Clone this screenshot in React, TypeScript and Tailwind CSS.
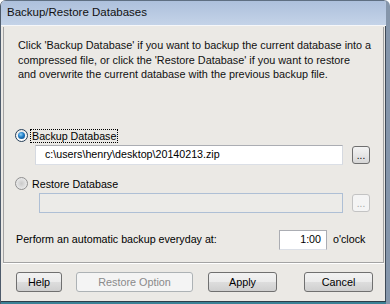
import React from "react";

function Radio({ checked }: { checked?: boolean }) {
  if (checked) {
    return (
      <span className="flex h-[13px] w-[13px] shrink-0 items-center justify-center rounded-full border border-[#263f58] bg-[linear-gradient(#e8e8e8,#ffffff)]">
        <span className="h-[7px] w-[7px] rounded-full bg-[radial-gradient(circle_at_40%_35%,#8fd2f8_0%,#1f7cc6_45%,#0b3f74_100%)]" />
      </span>
    );
  }
  return (
    <span className="h-[13px] w-[13px] shrink-0 rounded-full border border-[#8f8f8f] bg-[radial-gradient(circle_at_50%_50%,#c9c9c9_0%,#e2e2e2_55%,#f4f4f4_100%)]" />
  );
}

function BrowseButton({ disabled }: { disabled?: boolean }) {
  return (
    <button
      type="button"
      className={`ml-[9px] flex h-[18px] w-[18px] shrink-0 items-end justify-center rounded-[3px] border pb-[2px] text-[10px] leading-none ${
        disabled
          ? "border-[#c3c3c3] bg-[#f4f4f4] text-[#a6a6a6]"
          : "border-[#6f6f6f] bg-[linear-gradient(#f3f3f3,#e6e6e6_50%,#d6d6d6)] text-black"
      }`}
    >
      ...
    </button>
  );
}

function DlgButton({ label, width, disabled }: { label: string; width: string; disabled?: boolean }) {
  return (
    <button
      type="button"
      className={`${width} flex h-[20px] items-center justify-center rounded-[3px] border text-[10.8px] ${
        disabled
          ? "border-[#adb2b5] bg-[#f4f4f4] text-[#8a8a8a]"
          : "border-[#707070] bg-[linear-gradient(#f2f2f2,#ebebeb_50%,#dddddd_51%,#cfcfcf)] text-black"
      }`}
    >
      {label}
    </button>
  );
}

export default function App() {
  return (
    <div className="flex h-[304px] w-[390px] flex-col overflow-hidden rounded-tl-[6px] rounded-tr-[6px] border-l border-r-[4px] border-l-[#4e5b6b] border-r-[#8596ab] bg-[#ebe9e5] font-['Liberation_Sans',Arial,sans-serif] text-[10.7px] text-black">
      {/* title bar */}
      <div className="flex h-[25px] shrink-0 items-center border-t border-[#5f6f82] bg-[linear-gradient(#adc0dc,#c4d3e8)] pl-[6px] text-[11.5px] text-[#111]">
        Backup/Restore Databases
      </div>
      <div className="h-px shrink-0 bg-[#f6f7f9]" />

      <div className="flex flex-1 flex-col border-r border-r-[#3f4a57] pl-[2px] pr-px pt-px">
        {/* main panel */}
        <div className="flex h-[236px] flex-col border-x border-b border-[#a3a3a3]">
          <p className="mt-[11px] whitespace-nowrap pl-[14px] text-[10.85px] leading-[14.5px] text-[#111]">
            Click 'Backup Database' if you want to backup the current database into a
            <br />
            compressed file, or click the 'Restore Database' if you want to restore
            <br />
            and overwrite the current database with the previous backup file.
          </p>

          <div className="mt-[47px] flex h-[14px] items-center pl-[11px]">
            <Radio checked />
            <span className="ml-[2px] border border-dotted border-black px-px leading-[12px]">
              Backup Database
            </span>
          </div>
          <div className="mt-[2px] flex items-center pl-[31px]">
            <div className="flex h-[20px] w-[308px] items-center border border-[#abadb3] border-b-[#dbdfe6] border-x-[#d5d9e0] bg-white pl-[9px]">
              c:\users\henry\desktop\20140213.zip
            </div>
            <BrowseButton />
          </div>

          <div className="mt-[12px] flex h-[14px] items-center pl-[11px]">
            <Radio />
            <span className="ml-[2px] border border-transparent px-px leading-[12px]">
              Restore Database
            </span>
          </div>
          <div className="mt-[2px] flex items-center pl-[35px]">
            <div className="h-[20px] w-[304px] border border-[#aebfd5] bg-[#ecebe8]" />
            <BrowseButton disabled />
          </div>

          <div className="mt-[17px] flex items-center pl-[12px]">
            <span className="w-[263px]">Perform an automatic backup everyday at:</span>
            <div className="flex h-[20px] w-[48px] items-center justify-end border border-[#abadb3] border-b-[#dbdfe6] bg-white pr-[5px]">
              1:00
            </div>
            <span className="ml-[6px]">o'clock</span>
          </div>
        </div>

        {/* button bar */}
        <div className="flex flex-1 items-start border-t border-t-white pl-[13px] pt-[8px]">
          <DlgButton label="Help" width="w-[46px]" />
          <div className="ml-[14px]">
            <DlgButton label="Restore Option" width="w-[117px]" disabled />
          </div>
          <div className="ml-[15px]">
            <DlgButton label="Apply" width="w-[69px]" />
          </div>
          <div className="ml-[27px]">
            <DlgButton label="Cancel" width="w-[69px]" />
          </div>
        </div>
      </div>
      <div className="h-px shrink-0 bg-[#2f3d49]" />
      <div className="h-[2px] shrink-0 bg-[#3b8196]" />
    </div>
  );
}
